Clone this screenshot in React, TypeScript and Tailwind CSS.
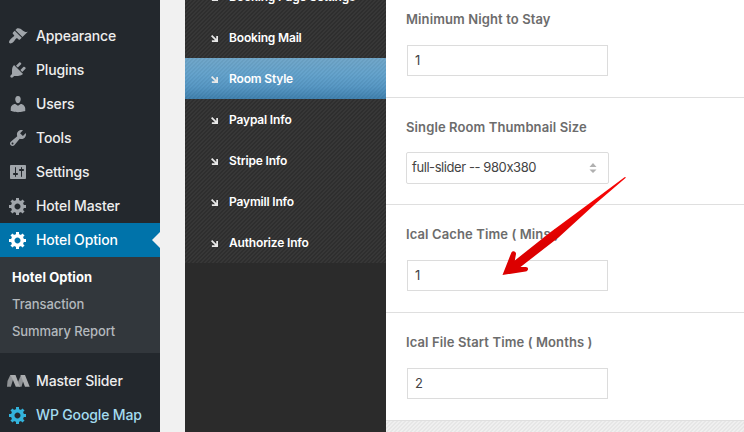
import type { ReactNode } from "react";

const icons = {
  appearance:
    "M14.48 11.06L7.41 3.99l1.5-1.5c.5-.56 2.3-.47 3.51.32 1.21.8 1.43 1.28 2.91 2.1 1.18.64 2.45 1.26 4.45.85zm-.71.71L6.7 4.7 4.93 6.47c-.39.39-.39 1.02 0 1.41l1.06 1.06c.39.39.39 1.03 0 1.42-.6.6-1.43 1.11-2.21 1.69-.35.26-.7.53-1.01.84C1.43 14.23.4 16.08 1.4 17.07c.99 1 2.84-.03 4.18-1.36.31-.31.58-.66.85-1.02.57-.78 1.08-1.61 1.69-2.21.39-.39 1.02-.39 1.41 0l1.06 1.06c.39.39 1.02.39 1.41 0z",
  plugins:
    "M13.11 4.36L9.87 7.6 8 5.73l3.24-3.24c.35-.34 1.05-.2 1.56.32.52.51.66 1.21.31 1.55zm-8 1.77l.91-1.12 9.01 9.01-1.19.84c-.71.71-2.63 1.16-3.82 1.16H6.14L4.9 17.26c-.59.59-1.54.59-2.12 0-.59-.58-.59-1.53 0-2.12l1.24-1.24v-3.88c0-1.13.4-3.19 1.09-3.89zm7.26 3.97l3.24-3.24c.34-.35 1.04-.21 1.55.31.52.51.66 1.21.31 1.55l-3.24 3.25z",
  users:
    "M10 9.25c-2.27 0-2.73-3.44-2.73-3.44C7 4.02 7.82 2 9.97 2c2.16 0 2.98 2.02 2.71 3.81 0 0-.41 3.44-2.68 3.44zm0 2.57L12.72 10c2.39 0 4.52 2.33 4.52 4.53v2.49s-3.65 1.13-7.24 1.13c-3.65 0-7.24-1.13-7.24-1.13v-2.49c0-2.25 1.94-4.48 4.47-4.48z",
  tools:
    "M16.68 9.77c-1.34 1.34-3.3 1.67-4.95.99l-5.41 6.52c-.99.99-2.59.99-3.58 0s-.99-2.59 0-3.57l6.52-5.42c-.68-1.65-.35-3.61.99-4.95 1.28-1.28 3.12-1.62 4.72-1.06l-2.89 2.89 2.82 2.82 2.86-2.87c.53 1.58.18 3.39-1.08 4.65zM3.81 16.21c.4.39 1.04.39 1.43 0 .4-.4.4-1.04 0-1.43-.39-.4-1.03-.4-1.43 0-.39.39-.39 1.03 0 1.43z",
  settings:
    "M18 16V4c0-.55-.45-1-1-1H3c-.55 0-1 .45-1 1v12c0 .55.45 1 1 1h14c.55 0 1-.45 1-1zM8 11h1c.55 0 1 .45 1 1s-.45 1-1 1H8v1.5c0 .28-.22.5-.5.5s-.5-.22-.5-.5V13H6c-.55 0-1-.45-1-1s.45-1 1-1h1V5.5c0-.28.22-.5.5-.5s.5.22.5.5V11zm5-2h-1c-.55 0-1-.45-1-1s.45-1 1-1h1V5.5c0-.28.22-.5.5-.5s.5.22.5.5V7h1c.55 0 1 .45 1 1s-.45 1-1 1h-1v5.5c0 .28-.22.5-.5.5s-.5-.22-.5-.5V9z",
  gear: "M18 12h-2.18c-.17.7-.44 1.35-.81 1.93l1.54 1.54-2.1 2.1-1.54-1.54c-.58.36-1.23.63-1.91.79V19H8v-2.18c-.68-.16-1.33-.43-1.91-.79l-1.54 1.54-2.12-2.12 1.54-1.54c-.36-.58-.63-1.23-.79-1.91H1V9.03h2.17c.16-.7.44-1.35.8-1.94L2.43 5.55l2.1-2.1 1.54 1.54c.58-.37 1.24-.64 1.93-.81V2h3v2.18c.68.16 1.33.43 1.91.79l1.54-1.54 2.12 2.12-1.54 1.54c.36.59.64 1.24.8 1.94H18V12zm-8.5 1.5c1.66 0 3-1.34 3-3s-1.34-3-3-3-3 1.34-3 3 1.34 3 3 3z",
};

function Icon({ path }: { path: string }) {
  return (
    <svg viewBox="0 0 20 20" className="size-5 shrink-0 fill-current">
      <path d={path} />
    </svg>
  );
}

function MenuItem({ icon, label, tone = "text-[#a0a5aa]", text = "text-[#eee]" }: { icon: ReactNode; label: string; tone?: string; text?: string }) {
  return (
    <li className="flex h-[34px] items-center gap-2 pl-2">
      <span className={`flex w-5 justify-center ${tone}`}>{icon}</span>
      <span className={`text-sm font-medium tracking-[-0.15px] whitespace-nowrap ${text}`}>{label}</span>
    </li>
  );
}

function MasterSliderIcon() {
  return (
    <svg viewBox="0 0 24 14" className="h-[14px] w-6 shrink-0">
      <path d="M1 12.800 1.500 7 4.300 1h4.200L4.800 12.800z" fill="#8f9295" />
      <path d="M12.800 12.800 12 8 15 1h4l-3.500 11.800z" fill="#8f9295" />
      <path d="M4.300 1h5.200l4.500 11.800H9.800L6.500 5z" fill="#abadaf" />
      <path d="M14.500 1h4.500l4.700 11.800h-4.700z" fill="#abadaf" />
    </svg>
  );
}

function AdminMenu() {
  return (
    <nav className="h-full w-40 shrink-0 bg-[#23282d] pt-[19px]">
      <ul>
        <MenuItem icon={<Icon path={icons.appearance} />} label="Appearance" />
        <MenuItem icon={<Icon path={icons.plugins} />} label="Plugins" />
        <MenuItem icon={<Icon path={icons.users} />} label="Users" />
        <MenuItem icon={<Icon path={icons.tools} />} label="Tools" />
        <MenuItem icon={<Icon path={icons.settings} />} label="Settings" />
        <MenuItem icon={<Icon path={icons.gear} />} label="Hotel Master" />
      </ul>
      <div className="flex items-center justify-between bg-[#0073aa]">
        <ul>
          <MenuItem icon={<Icon path={icons.gear} />} label="Hotel Option" tone="text-white" text="text-white" />
        </ul>
        <span className="border-y-8 border-r-8 border-y-transparent border-r-[#f1f1f1]" />
      </div>
      <ul className="h-24 bg-[#32373c] pt-[7px] pl-3 text-[13px] leading-[27px] font-medium tracking-[-0.08px] text-[#b4b9be]">
        <li className="font-bold tracking-[0.08px] text-white">Hotel Option</li>
        <li>Transaction</li>
        <li>Summary Report</li>
      </ul>
      <ul className="pt-[11px]">
        <MenuItem icon={<MasterSliderIcon />} label="Master Slider" />
        <MenuItem icon={<Icon path={icons.gear} />} label="WP Google Map" tone="text-[#33b3db]" text="text-[#a3dcf0]" />
      </ul>
    </nav>
  );
}

const tabs = ["Booking Page Settings", "Booking Mail", "Room Style", "Paypal Info", "Stripe Info", "Paymill Info", "Authorize Info"];

function OptionTabs() {
  return (
    <aside className="h-full w-[201px] shrink-0 bg-[#2b2b2b]">
      <ul className="-mt-6 bg-[repeating-linear-gradient(135deg,#2e2e2e_0_1px,#373737_1px_2.828px)]">
        {tabs.map((tab) => (
          <li
            key={tab}
            className={`flex h-[41px] items-center gap-3 pl-[25px] text-xs font-semibold tracking-[-0.17px] whitespace-nowrap text-white ${
              tab === "Room Style"
                ? "bg-[repeating-linear-gradient(135deg,#0000000a_0_1px,#ffffff05_1px_2.828px),linear-gradient(#6fa5c8,#62a1cb_40%,#5596c3_70%,#3f80ad)]"
                : ""
            }`}
          >
            <svg viewBox="0 0 8 8" className="mt-px ml-px size-[7px] shrink-0" fill="none" stroke="#e8e8e8" strokeWidth="2">
              <path d="M.7.700 6.500 6.500M7 1v6H1" />
            </svg>
            <span className="-ml-px">{tab}</span>
          </li>
        ))}
      </ul>
    </aside>
  );
}

function Field({ label, height = "h-[108px]", children }: { label: string; height?: string; children: ReactNode }) {
  return (
    <div className={`border-b border-[#dfdfdf] bg-white pt-[21px] pl-5 ${height}`}>
      <div className="h-[18px] text-[13px] leading-[17px] font-semibold tracking-[0.11px] whitespace-nowrap text-[#6c6c6c]">{label}</div>
      <div className="mt-4">{children}</div>
    </div>
  );
}

function TextBox({ value }: { value: string }) {
  return (
    <div className="ml-px flex h-[31px] w-[201px] items-center border border-[#dcdcdc] pl-[7px] text-[13px] text-[#444]">{value}</div>
  );
}

function Arrow() {
  return (
    <svg viewBox="0 0 136 112" className="absolute top-[170px] left-[496px] h-[112px] w-[136px]">
      <defs>
        <linearGradient id="red" x1="0.400" y1="0.400" x2="0.500" y2="0.600">
          <stop offset="0" stopColor="#f50505" />
          <stop offset="1" stopColor="#dc0000" />
        </linearGradient>
      </defs>
      <path
        d="M129.300 7 128.500 7.300 100 28.500 54 62.500 18.800 90.500 20 84C20.300 80.800 16 80.200 15.200 83L6.500 105 29.500 101.500C33 100.800 32.800 96.800 29.500 97L24.500 97 62.500 67.500 100 33.300 129.800 7.800Z"
        fill="url(#red)"
      />
    </svg>
  );
}

export default function App() {
  return (
    <div className="relative flex h-[432px] w-[744px] overflow-hidden bg-[#f1f1f1] font-['Inter','Liberation_Sans',sans-serif] [font-feature-settings:'calt'_0]">
      <AdminMenu />
      <div className="w-[25px] shrink-0" />
      <OptionTabs />
      <main className="h-full flex-1 bg-[repeating-linear-gradient(135deg,#e6e6e6_0_1px,#efefef_1px_2.828px)]">
        <div className="-mt-[10px]">
          <Field label="Minimum Night to Stay">
            <TextBox value="1" />
          </Field>
          <Field label="Single Room Thumbnail Size" height="h-[107px]">
            <div className="-mt-px flex h-8 w-[203px] items-center justify-between rounded-[2px] border border-[#dcdcdc] pr-[11px] pl-[5px] text-[13px] tracking-[-0.42px] text-[#444]">
              full-slider -- 980x380
              <svg viewBox="0 0 8 10" className="h-[10px] w-2 fill-[#b0b0b0]">
                <path d="M4 0 7.500 4h-7zM4 10 7.500 6.500h-7z" />
              </svg>
            </div>
          </Field>
          <Field label="Ical Cache Time ( Mins )">
            <TextBox value="1" />
          </Field>
          <Field label="Ical File Start Time ( Months )">
            <TextBox value="2" />
          </Field>
        </div>
      </main>
      <Arrow />
    </div>
  );
}
